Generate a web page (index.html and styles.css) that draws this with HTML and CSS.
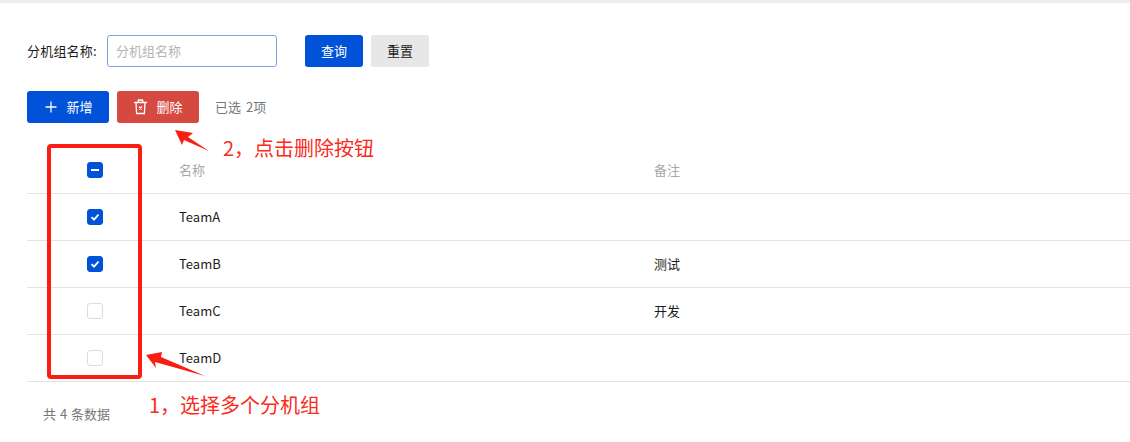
FILE: index.html
```html
<!DOCTYPE html>
<html lang="zh-CN">

<head>
    <meta charset="UTF-8">
    <title>分机组</title>
    <link rel="stylesheet" href="styles.css">
</head>

<body>
    <div class="top-line"></div>
    <div class="page">
        <form class="search">
            <label class="search-label">分机组名称:</label>
            <input class="search-input" type="text" placeholder="分机组名称">
            <button class="btn primary search-btn" type="button"><span class="btn-text">查询</span></button>
            <button class="btn plain" type="button"><span class="btn-text">重置</span></button>
        </form>

        <div class="toolbar">
            <button class="btn primary wide" type="button">
                <svg class="icon" viewBox="0 0 16 16"><path d="M8 2.5v11M2.5 8h11" /></svg>
                <span class="btn-text">新增</span>
            </button>
            <button class="btn danger wide" type="button">
                <svg class="icon" viewBox="0 0 16 16"><path d="M1 3.5h13M5 3.5l.5-2.5h4l.5 2.5M3 3.5l.6 11h7.800l.6-11M6 7.500l3 3M9 7.500l-3 3" /></svg>
                <span class="btn-text">删除</span>
            </button>
            <span class="selected">已选 2项</span>
        </div>

        <div class="table">
            <div class="row head">
                <div class="cell-check"><span class="check on"><span class="dash"></span></span></div>
                <div class="cell-name">名称</div>
                <div class="cell-note">备注</div>
            </div>
            <div class="row">
                <div class="cell-check"><span class="check on"><svg viewBox="0 0 16 16"><path d="M4.5 8.2l2.5 2.4 4.5-5" /></svg></span></div>
                <div class="cell-name">TeamA</div>
                <div class="cell-note"></div>
            </div>
            <div class="row">
                <div class="cell-check"><span class="check on"><svg viewBox="0 0 16 16"><path d="M4.5 8.2l2.5 2.4 4.5-5" /></svg></span></div>
                <div class="cell-name">TeamB</div>
                <div class="cell-note">测试</div>
            </div>
            <div class="row">
                <div class="cell-check"><span class="check"></span></div>
                <div class="cell-name">TeamC</div>
                <div class="cell-note">开发</div>
            </div>
            <div class="row">
                <div class="cell-check"><span class="check"></span></div>
                <div class="cell-name">TeamD</div>
                <div class="cell-note"></div>
            </div>
        </div>

        <div class="total">共 4 条数据</div>
    </div>

    <!-- red annotations drawn over the screenshot -->
    <div class="mark-box"></div>
    <svg class="mark-arrow arrow-delete" viewBox="0 0 40 26"><polygon points="1,1 19,4 14,8 35,22 10,11 8,16" /></svg>
    <svg class="mark-arrow arrow-select" viewBox="0 0 62 28"><polygon points="1,5 17,2 16,7 60,26 10,12 11,18" /></svg>
    <div class="mark-text text-delete">2，点击删除按钮</div>
    <div class="mark-text text-select">1，选择多个分机组</div>
</body>

</html>
```

FILE: styles.css
```css
* {
    margin: 0;
    padding: 0;
    box-sizing: border-box;
}

body {
    font-family: 'Noto Sans CJK SC', 'Noto Sans', sans-serif;
    font-size: 13px;
    color: #1c1c1c;
    background: white;
    position: relative;
    height: 442px;
    overflow: hidden;
}

.top-line {
    height: 3px;
    background: #eeeeee;
}

.page {
    padding: 32px 0 0 27px;
}

.search {
    display: flex;
    align-items: center;
    height: 32px;
}

.search-label {
    width: 80px;
    padding-bottom: 2px;
    letter-spacing: 0.2px;
}

.search-input {
    width: 170px;
    height: 32px;
    border: 1px solid #7fa3e0;
    border-radius: 3px;
    padding: 0 8px 2px;
    font: inherit;
    outline: none;
}

.search-input::placeholder {
    color: #b5b5b5;
}

.btn {
    border: none;
    border-radius: 3px;
    height: 32px;
    width: 58px;
    font: inherit;
    cursor: pointer;
    display: flex;
    align-items: center;
    justify-content: center;
}

.btn-text {
    padding-bottom: 2px;
}

.search-btn {
    margin-left: 28px;
    margin-right: 8px;
}

.primary {
    background: #0052d9;
    color: white;
}

.plain {
    background: #e7e7e7;
    color: #222;
}

.danger {
    background: #d54941;
    color: white;
}

.wide {
    width: 82px;
    gap: 7px;
}

.icon {
    width: 16px;
    height: 16px;
    fill: none;
    stroke: white;
    stroke-width: 1.3;
}

.toolbar {
    display: flex;
    align-items: center;
    gap: 8px;
    margin-top: 24px;
}

.selected {
    margin-left: 8px;
    padding-bottom: 2px;
    color: #777;
    word-spacing: 2px;
}

.table {
    margin-top: 24px;
}

.row {
    display: flex;
    align-items: center;
    height: 47px;
    border-bottom: 1px solid #e3e3e3;
}

.head {
    color: #a8a8a8;
}

.cell-check {
    width: 136px;
    display: flex;
    justify-content: center;
}

.cell-name {
    flex: 0 0 491px;
    padding: 0 0 2px 16px;
}

.cell-note {
    flex: 1;
    padding-bottom: 2px;
}

.check {
    width: 16px;
    height: 16px;
    border: 1px solid #dcdcdc;
    border-radius: 3px;
    background: white;
    display: flex;
    align-items: center;
    justify-content: center;
}

.check.on {
    background: #0052d9;
    border-color: #0052d9;
}

.check svg {
    width: 16px;
    height: 16px;
    flex: none;
    fill: none;
    stroke: white;
    stroke-width: 1.8;
}

.dash {
    width: 8px;
    height: 2px;
    background: white;
}

.total {
    margin: 22px 0 0 16px;
    color: #777;
    word-spacing: 1px;
}

.mark-box {
    position: absolute;
    left: 47px;
    top: 144px;
    width: 95px;
    height: 235px;
    border: 4px solid #fa1e12;
    border-radius: 4px;
}

.mark-arrow {
    position: absolute;
    fill: #fa1e12;
}

.arrow-delete {
    left: 174px;
    top: 129px;
    width: 40px;
    height: 26px;
}

.arrow-select {
    left: 145px;
    top: 350px;
    width: 62px;
    height: 28px;
}

.mark-text {
    position: absolute;
    font-size: 20px;
    line-height: 28px;
    color: #fa2a20;
    white-space: nowrap;
}

.text-delete {
    left: 223px;
    top: 134px;
}

.text-select {
    left: 149px;
    top: 391px;
}
```
